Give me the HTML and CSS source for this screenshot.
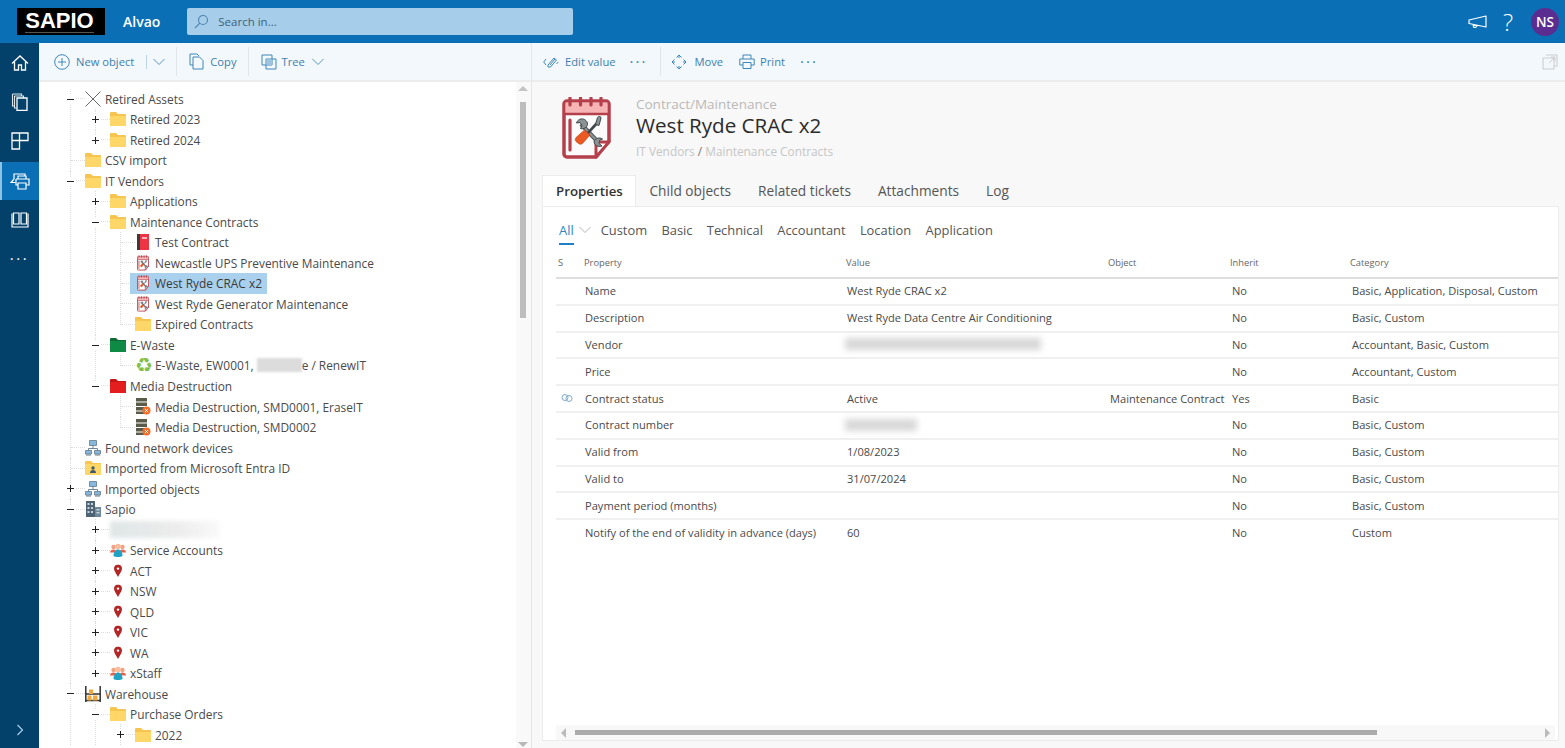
FILE: index.html
```html
<!DOCTYPE html>
<html>
<head>
    <meta name="viewport" content="width=device-width, initial-scale=1.0">
    <title>Alvao</title>
    <link rel="stylesheet" href="styles.css">
</head>
<body>
<svg class="defs" width="0" height="0">
    <symbol id="folder" viewBox="0 0 16 14">
        <path d="M0 1a1 1 0 0 1 1-1h5l2 2h7a1 1 0 0 1 1 1v10a1 1 0 0 1-1 1H1a1 1 0 0 1-1-1z" fill="#f5c451"/>
        <path d="M0 4h16v9a1 1 0 0 1-1 1H1a1 1 0 0 1-1-1z" fill="#ffd768"/>
    </symbol>
    <symbol id="folder-green" viewBox="0 0 16 14">
        <path d="M0 1a1 1 0 0 1 1-1h5l2 2h8v12H0z" fill="#0d6b36"/>
        <path d="M0 3h16v11H0z" fill="#0f8a45"/>
    </symbol>
    <symbol id="folder-red" viewBox="0 0 16 14">
        <path d="M0 1a1 1 0 0 1 1-1h5l2 2h8v12H0z" fill="#c51616"/>
        <path d="M0 3h16v11H0z" fill="#e41e1e"/>
    </symbol>
    <symbol id="folder-user" viewBox="0 0 16 14">
        <path d="M0 1a1 1 0 0 1 1-1h5l2 2h8v12H0z" fill="#f5c451"/>
        <path d="M0 3h16v11H0z" fill="#ffd768"/>
        <circle cx="8" cy="7" r="1.700" fill="#3d5a70"/>
        <path d="M5 12c0-2 1.200-3 3-3s3 1 3 3z" fill="#3d5a70"/>
    </symbol>
    <symbol id="contract" viewBox="0 0 49 62">
        <path d="M5 4h39a3 3 0 0 1 3 3v37L34 60H5a3 3 0 0 1-3-3V7a3 3 0 0 1 3-3z" fill="#fbfbfb" stroke="#b5404c" stroke-width="3.500"/>
        <path d="M3.500 5.500h42v11h-42z" fill="#f6b4b4"/>
        <path d="M3 17h43" stroke="#b5404c" stroke-width="2.500"/>
        <path d="M8 1v7M18.500 1v7M29 1v7M39 1v7M8 23v30" stroke="#b5404c" stroke-width="3.200" stroke-linecap="round"/>
        <path d="M47 45H36a2 2 0 0 0-2 2v13z" fill="#fff" stroke="#b5404c" stroke-width="3" stroke-linejoin="round"/>
        <path d="M19 27l17 18" stroke="#4c5458" stroke-width="4.200"/>
        <path d="M19 27l17 18" stroke="#8a9296" stroke-width="2.200"/>
        <path d="M22.500 22.500c-3-1.500-7 0-8 3.500l3.500-.5 2 3-1.500 3c3 1 6.500-1 7-4 .2-2-1-4-3-5zM32 45c.5 3 4 5.500 8 4l-3-2.500.5-3 3-1.500c-3-2-7.500-1-8.500 3z" fill="#8a9296" stroke="#3f474b" stroke-width="1"/>
        <path d="M36 25L25 37" stroke="#3f474b" stroke-width="2.600"/>
        <path d="M33.500 27.500l2-7c1-1.500 3.500-1.500 3.500.5l-2 7.500z" fill="#8a9296" stroke="#3f474b" stroke-width="1"/>
        <path d="M22.500 33l5.500 5-7.500 8.500c-1 1-3 1-4 0l-2.500-2c-1-1-1-3 0-4z" fill="#ec5a24" stroke="#b53c10" stroke-width=".6"/>
    </symbol>
    <symbol id="book" viewBox="0 0 12 16">
        <path d="M2 0h10v16H2z" fill="#ee3344"/>
        <path d="M0 0h3v16H0z" fill="#3b3b3b"/>
        <path d="M5 3h5v2H5z" fill="#f7b3b8"/>
    </symbol>
    <symbol id="server" viewBox="0 0 16 17">
        <path d="M1 0h11v3.500H1zM1 4.500h11V8H1zM1 9h11v3.500H1zM1 13.500h8V16H1z" fill="#5b5b49"/>
        <circle cx="11.500" cy="12.500" r="4" fill="#f26f2c"/>
        <path d="M10 11l3 3M13 11l-3 3" stroke="#fff" stroke-width="1"/>
    </symbol>
    <symbol id="network" viewBox="0 0 16 16">
        <path d="M4.500.500h7v5h-7z" fill="#86b7dc" stroke="#64798a" stroke-width=".8"/>
        <path d="M8 5.500v3M3.500 10.500v-2h9v2" fill="none" stroke="#64798a" stroke-width=".9"/>
        <path d="M.5 10.500h6v3.500h-6zM9.500 10.500h6v3.500h-6z" fill="#86b7dc" stroke="#64798a" stroke-width=".8"/>
        <path d="M1 15h5M10 15h5" stroke="#64798a"/>
    </symbol>
    <symbol id="building" viewBox="0 0 16 16">
        <path d="M1 0h9v16H1z" fill="#4e6474"/>
        <path d="M10 6h6v10h-6z" fill="#6f8797"/>
        <path d="M2.500 2h2v2h-2zM6 2h2v2H6zM2.500 6h2v2h-2zM6 6h2v2H6zM2.500 10h2v2h-2zM6 10h2v2H6zM11.500 8h3v1.500h-3zM11.500 11h3v1.500h-3z" fill="#c3d2dc"/>
    </symbol>
    <symbol id="people" viewBox="0 0 16 14">
        <circle cx="3.500" cy="4" r="2.200" fill="#f3a183"/>
        <circle cx="12.500" cy="4" r="2.200" fill="#f3a183"/>
        <path d="M0 9.500c0-2 1.500-3 3.500-3s3 1 3 3zM9.500 9.500c0-2 1-3 3-3s3.500 1 3.500 3z" fill="#e8604c"/>
        <circle cx="8" cy="3.500" r="2.800" fill="#f7bd9c"/>
        <path d="M3.500 13c0-4 2-6.500 4.500-6.500s4.500 2.500 4.500 6.500c-2 1.300-7 1.300-9 0z" fill="#1fa2c4"/>
    </symbol>
    <symbol id="pin" viewBox="0 0 12 16">
        <path d="M6 0C2.800 0 1 2.400 1 5c0 3.500 3.500 7.500 5 10.500C7.500 12.500 11 8.500 11 5c0-2.600-1.800-5-5-5z" fill="#b32626"/>
        <circle cx="6" cy="5" r="1.500" fill="#fff"/>
    </symbol>
    <symbol id="warehouse" viewBox="0 0 16 16">
        <path d="M.8 0v16M15.200 0v16M.8 8h14.400M.8 14.500h14.400" stroke="#333" stroke-width="1.500"/>
        <path d="M4 3.500h4V8H4zM2.500 9.500h4v5h-4zM8 9.500h4.500v5H8z" fill="#f2a93b"/>
    </symbol>
    <symbol id="chev" viewBox="0 0 12 8">
        <path d="M.5 1L6 6.500 11.500 1" fill="none" stroke="#5b93bb" stroke-width="1"/>
    </symbol>
</svg>

<header class="topbar">
    <div class="logo"><span>SAPIO</span></div>
    <div class="app-name">Alvao</div>
    <div class="search">
        <svg width="15" height="15" viewBox="0 0 15 15"><circle cx="9" cy="6" r="4.500" fill="none" stroke="#4f86ad" stroke-width="1.100"/><path d="M5.800 9.200L1 14" stroke="#4f86ad" stroke-width="1.100"/></svg>
        <span>Search in...</span>
    </div>
    <div class="top-icons">
        <svg width="20" height="14" viewBox="0 0 20 14"><path d="M1 5l17-4v11L1 8.500zM5 9l.5 3c1.500 1 3.500.5 3.500-2" fill="none" stroke="#fff" stroke-width="1.200" stroke-linejoin="round"/></svg>
        <span class="help">?</span>
        <span class="avatar">NS</span>
    </div>
</header>

<div class="app">
    <nav class="rail">
        <a class="rail-item"><svg width="18" height="18" viewBox="0 0 18 18"><path d="M1 9.500L9 2l8 7.500M3.500 8v8h4v-5h3v5h4V8" fill="none" stroke="#fff" stroke-width="1.300"/></svg></a>
        <a class="rail-item"><svg width="18" height="18" viewBox="0 0 18 18"><path d="M1.500 1h9v2M1.500 1v12h2" fill="none" stroke="#dfe6ea" stroke-width="1.100"/><path d="M3.500 3h9v2M3.500 3v12h2" fill="none" stroke="#dfe6ea" stroke-width="1.100"/><path d="M6 5h10v12.500H6z" fill="none" stroke="#fff" stroke-width="1.300"/></svg></a>
        <a class="rail-item"><svg width="18" height="18" viewBox="0 0 18 18"><path d="M1 1h7.500v7.500H1zM8.500 1H17v7.500H8.500zM1 8.500h7.500V17H1z" fill="none" stroke="#fff" stroke-width="1.300"/></svg></a>
        <a class="rail-item active"><svg width="20" height="18" viewBox="0 0 20 18"><path d="M4 7V2h11v2M4 7L1 10.500h4.500" fill="none" stroke="#fff" stroke-width="1.200"/><path d="M8 7V4h8v3M6 7h13v6h-3M6 7v6h2M8 11h8v6H8z" fill="none" stroke="#fff" stroke-width="1.200"/></svg></a>
        <a class="rail-item"><svg width="18" height="18" viewBox="0 0 18 18"><path d="M2.500 2h5.500v11H2.500zM10 2h5.500v11H10z" fill="none" stroke="#fff" stroke-width="1.200"/><path d="M1 2.500V16h16V2.500" fill="none" stroke="#fff" stroke-width="1.200"/></svg></a>
        <a class="rail-item rail-dots">&middot;&middot;&middot;</a>
        <a class="rail-expand"><svg width="8" height="12" viewBox="0 0 8 12"><path d="M1.500 1l5 5-5 5" fill="none" stroke="#a9cfe8" stroke-width="1.200"/></svg></a>
    </nav>

    <section class="tree-pane">
        <div class="toolbar">
            <button class="tool"><svg width="16" height="16" viewBox="0 0 16 16"><circle cx="8" cy="8" r="7.300" fill="none" stroke="#3f86b8"/><path d="M8 4v8M4 8h8" stroke="#3f86b8"/></svg>New object</button>
            <i class="split"></i>
            <svg class="chev" width="12" height="8"><use href="#chev"/></svg>
            <i class="sep sep-a"></i>
            <button class="tool"><svg width="15" height="17" viewBox="0 0 15 17"><path d="M1 1h7l2 2M1 1v11h3" fill="none" stroke="#3f86b8"/><path d="M4 4h6.500L14 7.500V16H4z" fill="none" stroke="#3f86b8"/></svg>Copy</button>
            <i class="sep sep-b"></i>
            <button class="tool tool-tree"><svg width="16" height="16" viewBox="0 0 16 16"><path d="M1 1h10v10H1zM5 5h10v10H5z" fill="none" stroke="#3f86b8"/><path d="M5.500 5.500h5.500v5.500H5.500z" fill="#9dc3de"/></svg>Tree</button>
            <svg class="chev chev-tree" width="12" height="8"><use href="#chev"/></svg>
        </div>
        <div class="tree-wrap">
            <ul class="tree">
                <li><div class="node"><i class="tg minus"></i><span class="lbl"><svg class="ic" width="16" height="16" viewBox="0 0 16 16"><path d="M.5.500l15 15M15.500.500l-15 15" stroke="#555" stroke-width=".9"/></svg>Retired Assets</span></div>
                    <ul>
                        <li><div class="node"><i class="tg plus"></i><span class="lbl"><svg class="ic" width="16" height="14"><use href="#folder"/></svg>Retired 2023</span></div></li>
                        <li><div class="node"><i class="tg plus"></i><span class="lbl"><svg class="ic" width="16" height="14"><use href="#folder"/></svg>Retired 2024</span></div></li>
                    </ul>
                </li>
                <li><div class="node"><span class="lbl"><svg class="ic" width="16" height="14"><use href="#folder"/></svg>CSV import</span></div></li>
                <li><div class="node"><i class="tg minus"></i><span class="lbl"><svg class="ic" width="16" height="14"><use href="#folder"/></svg>IT Vendors</span></div>
                    <ul>
                        <li><div class="node"><i class="tg plus"></i><span class="lbl"><svg class="ic" width="16" height="14"><use href="#folder"/></svg>Applications</span></div></li>
                        <li><div class="node"><i class="tg minus"></i><span class="lbl"><svg class="ic" width="16" height="14"><use href="#folder"/></svg>Maintenance Contracts</span></div>
                            <ul>
                                <li><div class="node"><span class="lbl"><svg class="ic" width="16" height="16" viewBox="-2 0 16 16"><use href="#book" width="12" height="16"/></svg>Test Contract</span></div></li>
                                <li><div class="node"><span class="lbl"><svg class="ic" width="16" height="16" viewBox="-2 0 16 16"><use href="#contract" width="12" height="16"/></svg>Newcastle UPS Preventive Maintenance</span></div></li>
                                <li><div class="node"><span class="lbl selected"><svg class="ic" width="16" height="16" viewBox="-2 0 16 16"><use href="#contract" width="12" height="16"/></svg>West Ryde CRAC x2</span></div></li>
                                <li><div class="node"><span class="lbl"><svg class="ic" width="16" height="16" viewBox="-2 0 16 16"><use href="#contract" width="12" height="16"/></svg>West Ryde Generator Maintenance</span></div></li>
                                <li><div class="node"><span class="lbl"><svg class="ic" width="16" height="14"><use href="#folder"/></svg>Expired Contracts</span></div></li>
                            </ul>
                        </li>
                        <li><div class="node"><i class="tg minus"></i><span class="lbl"><svg class="ic" width="16" height="14"><use href="#folder-green"/></svg>E-Waste</span></div>
                            <ul>
                                <li><div class="node"><span class="lbl"><span class="recycle">&#9851;</span>E-Waste, EW0001,<i class="blur-name"></i>e / RenewIT</span></div></li>
                            </ul>
                        </li>
                        <li><div class="node"><i class="tg minus"></i><span class="lbl"><svg class="ic" width="16" height="14"><use href="#folder-red"/></svg>Media Destruction</span></div>
                            <ul>
                                <li><div class="node"><span class="lbl"><svg class="ic" width="16" height="17"><use href="#server"/></svg>Media Destruction, SMD0001, EraseIT</span></div></li>
                                <li><div class="node"><span class="lbl"><svg class="ic" width="16" height="17"><use href="#server"/></svg>Media Destruction, SMD0002</span></div></li>
                            </ul>
                        </li>
                    </ul>
                </li>
                <li><div class="node"><span class="lbl"><svg class="ic" width="16" height="16"><use href="#network"/></svg>Found network devices</span></div></li>
                <li><div class="node"><span class="lbl"><svg class="ic" width="16" height="14"><use href="#folder-user"/></svg>Imported from Microsoft Entra ID</span></div></li>
                <li><div class="node"><i class="tg plus"></i><span class="lbl"><svg class="ic" width="16" height="16"><use href="#network"/></svg>Imported objects</span></div></li>
                <li><div class="node"><i class="tg minus"></i><span class="lbl"><svg class="ic" width="16" height="16"><use href="#building"/></svg>Sapio</span></div>
                    <ul>
                        <li><div class="node"><i class="tg plus"></i><span class="lbl"><i class="blur-org"></i></span></div></li>
                        <li><div class="node"><i class="tg plus"></i><span class="lbl"><svg class="ic" width="16" height="14"><use href="#people"/></svg>Service Accounts</span></div></li>
                        <li><div class="node"><i class="tg plus"></i><span class="lbl"><svg class="ic" width="16" height="16" viewBox="-4 -2 20 20"><use href="#pin" width="12" height="16"/></svg>ACT</span></div></li>
                        <li><div class="node"><i class="tg plus"></i><span class="lbl"><svg class="ic" width="16" height="16" viewBox="-4 -2 20 20"><use href="#pin" width="12" height="16"/></svg>NSW</span></div></li>
                        <li><div class="node"><i class="tg plus"></i><span class="lbl"><svg class="ic" width="16" height="16" viewBox="-4 -2 20 20"><use href="#pin" width="12" height="16"/></svg>QLD</span></div></li>
                        <li><div class="node"><i class="tg plus"></i><span class="lbl"><svg class="ic" width="16" height="16" viewBox="-4 -2 20 20"><use href="#pin" width="12" height="16"/></svg>VIC</span></div></li>
                        <li><div class="node"><i class="tg plus"></i><span class="lbl"><svg class="ic" width="16" height="16" viewBox="-4 -2 20 20"><use href="#pin" width="12" height="16"/></svg>WA</span></div></li>
                        <li><div class="node"><i class="tg plus"></i><span class="lbl"><svg class="ic" width="16" height="14"><use href="#people"/></svg>xStaff</span></div></li>
                    </ul>
                </li>
                <li class="more-below"><div class="node"><i class="tg minus"></i><span class="lbl"><svg class="ic" width="16" height="16"><use href="#warehouse"/></svg>Warehouse</span></div>
                    <ul>
                        <li class="more-below"><div class="node"><i class="tg minus"></i><span class="lbl"><svg class="ic" width="16" height="14"><use href="#folder"/></svg>Purchase Orders</span></div>
                            <ul>
                                <li class="more-below"><div class="node"><i class="tg plus"></i><span class="lbl"><svg class="ic" width="16" height="14"><use href="#folder"/></svg>2022</span></div></li>
                            </ul>
                        </li>
                    </ul>
                </li>
            </ul>
            <div class="vscroll">
                <b class="arrow-up"></b>
                <b class="vthumb"></b>
                <b class="arrow-down"></b>
            </div>
        </div>
    </section>

    <main class="detail">
        <div class="toolbar toolbar-detail">
            <button class="tool"><svg width="16" height="12" viewBox="0 0 16 12"><path d="M5 9l6-7 2.500 2-6 7H5zM7 9l5-6" fill="none" stroke="#3f86b8"/><path d="M3 3L.7 6 3 9M13.500 8l1.800-2" fill="none" stroke="#3f86b8"/></svg>Edit value</button>
            <span class="more more-a">&middot;&middot;&middot;</span>
            <i class="sep sep-c"></i>
            <button class="tool tool-move"><svg width="16" height="16" viewBox="0 0 16 16"><path d="M8 1v3M8 12v3M1 8h3M12 8h3" stroke="#3f86b8"/><path d="M5.500 3.500L8 1l2.500 2.500M5.500 12.500L8 15l2.500-2.500M3.500 5.500L1 8l2.500 2.500M12.500 5.500L15 8l-2.500 2.500" fill="none" stroke="#3f86b8"/></svg>Move</button>
            <button class="tool tool-print"><svg width="16" height="15" viewBox="0 0 16 15"><path d="M4 5V1h8v4M4 11H.8V5h14.400v6H12M4 8.500h8v6H4z" fill="none" stroke="#3f86b8"/></svg>Print</button>
            <span class="more more-b">&middot;&middot;&middot;</span>
            <svg class="popout" width="16" height="16" viewBox="0 0 16 16"><path d="M4 1h11v11h-3M1 4h11v11H1z" fill="none" stroke="#cdcdcd" stroke-width="1.100"/><path d="M7 9l6-6M9 3h4v4" fill="none" stroke="#cdcdcd"/></svg>
        </div>

        <div class="obj-head">
            <svg class="obj-icon" width="49" height="62"><use href="#contract"/></svg>
            <div class="obj-text">
                <div class="obj-type">Contract/Maintenance</div>
                <h1>West Ryde CRAC x2</h1>
                <div class="crumbs">IT Vendors <em>/</em> Maintenance Contracts</div>
            </div>
        </div>

        <div class="tabs">
            <a class="tab on">Properties</a>
            <a class="tab">Child objects</a>
            <a class="tab">Related tickets</a>
            <a class="tab">Attachments</a>
            <a class="tab">Log</a>
        </div>

        <div class="card">
            <div class="subtabs">
                <a class="sub on">All</a>
                <svg class="chev-all" width="12" height="8" viewBox="0 0 12 8"><path d="M.5 1L6 6.500 11.500 1" fill="none" stroke="#b5b5b5"/></svg>
                <a class="sub">Custom</a>
                <a class="sub">Basic</a>
                <a class="sub">Technical</a>
                <a class="sub">Accountant</a>
                <a class="sub">Location</a>
                <a class="sub">Application</a>
            </div>
            <table class="props">
                <colgroup><col class="c-s"><col class="c-prop"><col class="c-val"><col class="c-obj"><col class="c-inh"><col class="c-cat"></colgroup>
                <thead>
                    <tr><th>S</th><th>Property</th><th>Value</th><th>Object</th><th>Inherit</th><th>Category</th></tr>
                </thead>
                <tbody>
                    <tr><td></td><td>Name</td><td>West Ryde CRAC x2</td><td></td><td>No</td><td>Basic, Application, Disposal, Custom</td></tr>
                    <tr><td></td><td>Description</td><td>West Ryde Data Centre Air Conditioning</td><td></td><td>No</td><td>Basic, Custom</td></tr>
                    <tr><td></td><td>Vendor</td><td><i class="blur-vendor"></i></td><td></td><td>No</td><td>Accountant, Basic, Custom</td></tr>
                    <tr><td></td><td>Price</td><td></td><td></td><td>No</td><td>Accountant, Custom</td></tr>
                    <tr><td><svg class="link" width="12" height="8" viewBox="0 0 12 8"><circle cx="4" cy="3.500" r="3" fill="none" stroke="#7fa9c8"/><circle cx="8" cy="4.500" r="3" fill="none" stroke="#7fa9c8"/></svg></td><td>Contract status</td><td>Active</td><td>Maintenance Contract</td><td>Yes</td><td>Basic</td></tr>
                    <tr><td></td><td>Contract number</td><td><i class="blur-number"></i></td><td></td><td>No</td><td>Basic, Custom</td></tr>
                    <tr><td></td><td>Valid from</td><td>1/08/2023</td><td></td><td>No</td><td>Basic, Custom</td></tr>
                    <tr><td></td><td>Valid to</td><td>31/07/2024</td><td></td><td>No</td><td>Basic, Custom</td></tr>
                    <tr><td></td><td>Payment period (months)</td><td></td><td></td><td>No</td><td>Basic, Custom</td></tr>
                    <tr><td></td><td>Notify of the end of validity in advance (days)</td><td>60</td><td></td><td>No</td><td>Custom</td></tr>
                </tbody>
            </table>
            <div class="hscroll">
                <b class="arrow-left"></b>
                <b class="hthumb"></b>
                <b class="arrow-right"></b>
            </div>
        </div>
    </main>
</div>
</body>
</html>
```
FILE: styles.css
```css
* {
    box-sizing: border-box;
}

html, body {
    height: 100%;
    margin: 0;
    overflow: hidden;
}

body {
    display: flex;
    flex-direction: column;
    font-family: "Open Sans", "Noto Sans", sans-serif;
    font-size: 11.900px;
    color: #4a4a4a;
    background: #f8f8f8;
}

.defs {
    position: absolute;
}

/* top bar */
.topbar {
    display: flex;
    align-items: center;
    flex: 0 0 43px;
    padding: 0 6px 0 17px;
    background: #0a6fb4;
    color: #fff;
}

.logo {
    width: 88px;
    height: 27px;
    margin-top: -1px;
    padding-right: 3px;
    background: #000;
    color: #fff;
    font-family: "Liberation Sans", sans-serif;
    font-size: 22px;
    font-weight: bold;
    line-height: 25px;
    text-align: center;
}

.logo span {
    display: inline-block;
    height: 25px;
    border-bottom: 1px solid #555;
}

.app-name {
    margin-left: 18px;
    font-size: 14px;
    font-weight: 600;
}

.search {
    display: flex;
    align-items: center;
    gap: 9px;
    width: 386px;
    height: 27px;
    margin-top: -1px;
    margin-left: 27px;
    padding-left: 7px;
    background: #a6cde9;
    border-radius: 2px;
    color: #3f5f78;
    font-size: 11.500px;
}

.top-icons {
    display: flex;
    align-items: center;
    margin-left: auto;
}

.help {
    margin-left: 15px;
    font-size: 24px;
    font-weight: 300;
    line-height: 1;
}

.avatar {
    width: 28px;
    height: 28px;
    margin-left: 18px;
    border-radius: 50%;
    background: #5c2d91;
    font-size: 13.500px;
    font-weight: 600;
    line-height: 28px;
    text-align: center;
}

/* main layout */
.app {
    display: flex;
    flex: 1;
    min-height: 0;
}

.rail {
    display: flex;
    flex-direction: column;
    flex: 0 0 39px;
    background: #03406a;
}

.rail-item {
    display: flex;
    align-items: center;
    justify-content: center;
    height: 39px;
}

.rail-item.active {
    height: 38px;
    margin-top: 2px;
    padding-right: 2px;
    background: #0a6fb4;
    border-left: 2px solid #8fc3e6;
}

.rail-dots {
    color: #fff;
    font-size: 15px;
    letter-spacing: 2.500px;
    line-height: 1;
}

.rail-expand {
    display: flex;
    justify-content: center;
    margin-top: auto;
    padding-bottom: 12px;
}

/* toolbars */
.toolbar {
    display: flex;
    align-items: center;
    flex: 0 0 39px;
    padding-left: 15px;
    background: #f3f8fc;
    border-bottom: 2px solid #ececec;
    color: #3f7fae;
}

.tool {
    display: flex;
    align-items: center;
    gap: 6px;
    padding: 0;
    border: 0;
    background: none;
    color: #3f7fae;
    font: inherit;
    font-size: 11.200px;
    white-space: nowrap;
}

.split {
    width: 1px;
    height: 14px;
    margin-left: 12px;
    background: #bcd6e8;
}

.sep {
    width: 1px;
    height: 29px;
    background: #e2e6e9;
}

.chev {
    margin-left: 6px;
}

.sep-a {
    margin: 0 12px 0 11px;
}

.sep-b {
    margin: 0 12px 0 11px;
}

.tool-tree {
    gap: 5px;
}

.chev-tree {
    margin-left: 7px;
}

.toolbar-detail {
    padding-left: 11px;
    padding-right: 7px;
}

.more {
    color: #3f7fae;
    font-size: 15px;
    letter-spacing: 2px;
    line-height: 1;
}

.more-a {
    margin-left: 14px;
}

.sep-c {
    margin: 0 10px 0 13px;
}

.more-b {
    margin-left: 15px;
}

.tool-move {
    gap: 7px;
}

.tool-print {
    gap: 5px;
    margin-left: 16px;
}

.popout {
    margin-left: auto;
}

/* tree */
.tree-pane {
    display: flex;
    flex-direction: column;
    flex: 0 0 493px;
    background: #fff;
    border-right: 1px solid #e6e6e6;
}

.tree-wrap {
    display: flex;
    flex: 1;
    min-height: 0;
}

.tree {
    flex: 1;
    margin: 0;
    padding: 6.500px 0 0 31px;
    overflow: hidden;
}

.tree, .tree ul {
    list-style: none;
}

.tree ul {
    margin: 0;
    padding: 0 0 0 25px;
}

.tree li {
    position: relative;
}

/* dotted guide lines */
.tree li::before {
    content: "";
    position: absolute;
    top: 0;
    bottom: 0;
    left: 0;
    border-left: 1px dotted #dcdcdc;
}

.tree li:last-child::before {
    bottom: auto;
    height: 11px;
}

.tree li.more-below::before {
    bottom: 0;
    height: auto;
}

.node {
    position: relative;
    display: flex;
    align-items: center;
    height: 20.520px;
    padding-left: 15px;
    white-space: nowrap;
}

.node::before {
    content: "";
    width: 14px;
    margin-left: -14px;
    border-top: 1px dotted #dcdcdc;
}

.tg {
    position: absolute;
    top: 6px;
    left: -4px;
    width: 9px;
    height: 9px;
    background: #fff;
}

.tg::before {
    content: "";
    position: absolute;
    top: 4px;
    left: 1px;
    width: 7px;
    height: 1px;
    background: #222;
}

.tg.plus::after {
    content: "";
    position: absolute;
    top: 1px;
    left: 4px;
    width: 1px;
    height: 7px;
    background: #222;
}

.lbl {
    display: flex;
    align-items: center;
    height: 21px;
}

.ic {
    flex: none;
    margin-right: 4px;
}

.selected {
    margin-left: -5px;
    padding: 0 5px;
    background: #a9d0ec;
    color: #3a3a3a;
}

.recycle {
    flex: none;
    width: 16px;
    margin-right: 4px;
    color: #85bf4b;
    font-family: "DejaVu Sans", sans-serif;
    font-size: 20px;
    font-weight: bold;
    line-height: 1;
    text-align: center;
}

.blur-name {
    display: block;
    width: 45px;
    height: 14px;
    margin: 0 0 0 3px;
    background: #dcdcdc;
    filter: blur(1px);
}

.blur-org {
    display: block;
    width: 110px;
    height: 17px;
    background: linear-gradient(90deg, #dfe6e6, #ececec 60%, #fafafa);
    filter: blur(2px);
}

.vscroll {
    position: relative;
    flex: 0 0 15px;
    background: #f9f9f9;
}

.vthumb {
    position: absolute;
    top: 20px;
    left: 4px;
    width: 6px;
    height: 216px;
    background: #bdbdbd;
}

.arrow-up, .arrow-down {
    position: absolute;
    left: 2px;
    width: 0;
    height: 0;
    border-left: 5px solid transparent;
    border-right: 5px solid transparent;
}

.arrow-up {
    top: 4px;
    border-bottom: 5px solid #c4c4c4;
}

.arrow-down {
    bottom: 1px;
    border-top: 5px solid #b8b8b8;
}

/* detail pane */
.detail {
    display: flex;
    flex-direction: column;
    flex: 1;
    min-width: 0;
}

.obj-head {
    display: flex;
    flex: 0 0 93px;
    padding: 15px 0 0 30px;
}

.obj-icon {
    flex: none;
}

.obj-text {
    margin-left: 25px;
}

.obj-type {
    margin-top: -1px;
    color: #b9b9b9;
    font-size: 13.500px;
    line-height: 17px;
}

h1 {
    margin: -1px 0 0;
    color: #2b2b2b;
    font-size: 20.600px;
    font-weight: 400;
    line-height: 27px;
}

.crumbs {
    margin-top: 4px;
    color: #c6c6c6;
    font-size: 11.850px;
    line-height: 16px;
}

.crumbs em {
    color: #777;
    font-style: normal;
}

.tabs {
    position: relative;
    z-index: 1;
    display: flex;
    flex: 0 0 30px;
    margin-left: 10px;
}

.tab {
    padding: 0 13.500px;
    color: #555;
    font-size: 13.700px;
    line-height: 31px;
}

.tab.on {
    width: 94px;
    height: 31px;
    padding: 0 0 0 13px;
    background: #fff;
    border: 1px solid #ececec;
    border-bottom: 0;
    color: #333;
    font-size: 13.300px;
    font-weight: 600;
    line-height: 30px;
}

.card {
    position: relative;
    display: flex;
    flex-direction: column;
    flex: 1;
    margin: 0 6px 7px 10px;
    padding: 0 0 0 13px;
    background: #fff;
    border: 1px solid #ececec;
}

.subtabs {
    display: flex;
    align-items: center;
    flex: 0 0 41px;
    padding: 4px 0 0 3px;
    color: #555;
    font-size: 12.900px;
}

.sub {
    margin-right: 14.300px;
}

.sub.on {
    position: relative;
    margin-right: 5px;
    color: #2f86c5;
}

.sub.on::after {
    content: "";
    position: absolute;
    right: 0;
    bottom: -6px;
    left: 0;
    height: 2px;
    background: #1f7fc4;
}

.chev-all {
    margin-right: 10px;
}

.props {
    width: 1002px;
    border-collapse: collapse;
    table-layout: fixed;
}

.c-s { width: 26px; }
.c-prop { width: 262px; }
.c-val { width: 263px; }
.c-obj { width: 122px; }
.c-inh { width: 120px; }
.c-cat { width: 209px; }

.props th {
    height: 30px;
    padding: 0 0 0 2px;
    border-bottom: 2px solid #dedede;
    color: #666;
    font-size: 9.300px;
    font-weight: 400;
    text-align: left;
}

.props th:nth-child(n+4) {
    padding-left: 1px;
}

.props td {
    height: 26.800px;
    padding: 0 0 1px 3px;
    border-bottom: 2px solid #f0f0f0;
    color: #4a4a4a;
    font-size: 11.100px;
    white-space: nowrap;
}

.props tr:last-child td {
    border-bottom: 0;
}

.link {
    display: block;
    margin-left: 2px;
}

.blur-vendor, .blur-number {
    display: block;
    height: 12px;
    margin-left: -2px;
    background: #d8d8d8;
    filter: blur(3px);
}

.blur-vendor {
    width: 196px;
}

.blur-number {
    width: 72px;
}

.hscroll {
    position: absolute;
    right: 3px;
    bottom: 0;
    left: 13px;
    height: 15px;
    background: #f8f8f8;
}

.hthumb {
    position: absolute;
    top: 5px;
    left: 19px;
    width: 802px;
    height: 5px;
    background: #ababab;
}

.arrow-left, .arrow-right {
    position: absolute;
    top: 3px;
    width: 0;
    height: 0;
    border-top: 5px solid transparent;
    border-bottom: 5px solid transparent;
}

.arrow-left {
    left: 5px;
    border-right: 5px solid #bbb;
}

.arrow-right {
    right: 5px;
    border-left: 5px solid #bbb;
}
```
